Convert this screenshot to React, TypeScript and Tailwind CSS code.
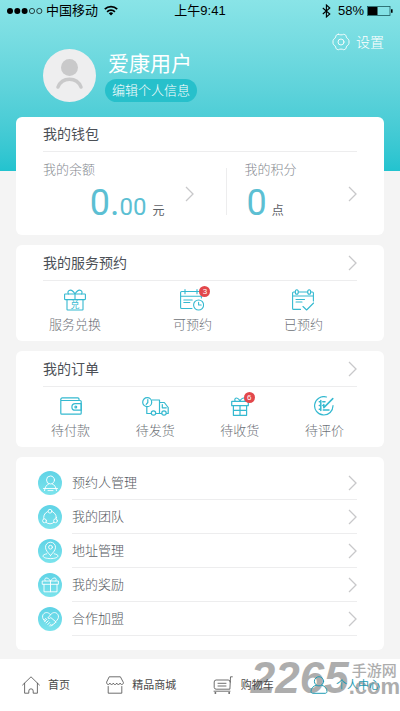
import type { ReactNode, SVGProps } from "react";

type IconProps = SVGProps<SVGSVGElement>;

const Icon = ({ children, ...props }: IconProps) => (
  <svg
    viewBox="0 0 24 24"
    fill="none"
    stroke="currentColor"
    strokeWidth={1.2}
    strokeLinecap="round"
    strokeLinejoin="round"
    aria-hidden="true"
    {...props}
  >
    {children}
  </svg>
);

const Chevron = () => (
  <svg
    viewBox="0 0 9 16"
    className="h-4 w-[9px] shrink-0 text-[#c8c8ca]"
    fill="none"
    stroke="currentColor"
    strokeWidth={1.3}
    aria-hidden="true"
  >
    <path d="M1 1l7 7-7 7" />
  </svg>
);

/* ---------- status bar ---------- */

const StatusBar = () => (
  <div className="flex h-[21px] items-center pr-[7px] pl-[7px] text-[13px] leading-5 text-black">
    <div className="flex flex-1 items-center">
      <svg viewBox="0 0 36 8" className="h-2 w-9" aria-hidden="true">
        <circle cx="3" cy="4" r="3" />
        <circle cx="10.3" cy="4" r="3" />
        <circle cx="17.6" cy="4" r="3" />
        <circle cx="25" cy="4" r="2.6" fill="none" stroke="#000" strokeWidth="0.7" />
        <circle cx="32.3" cy="4" r="2.6" fill="none" stroke="#000" strokeWidth="0.7" />
      </svg>
      <span className="ml-[3px]">中国移动</span>
      <svg viewBox="0 0 14 11" className="ml-[6px] h-[11px] w-[14px]" fill="none" stroke="#000" aria-hidden="true">
        <path d="M.8 4.2a9 9 0 0 1 12.4 0" strokeWidth="1.8" />
        <path d="M3.1 6.8a5.6 5.6 0 0 1 7.8 0" strokeWidth="1.8" />
        <path d="M7 10.600L4.800 8.300a3.200 3.200 0 0 1 4.400 0z" fill="#000" stroke="none" />
      </svg>
    </div>
    <span>上午9:41</span>
    <div className="flex flex-1 items-center justify-end">
      <svg viewBox="0 0 9 14" className="h-[14px] w-[9px]" fill="none" stroke="#000" strokeWidth="1.1" aria-hidden="true">
        <path d="M.8 4l7 6-3.4 3V1l3.4 3-7 6" />
      </svg>
      <span className="ml-[7px]">58%</span>
      <svg viewBox="0 0 26 10" className="ml-[3px] h-[10px] w-[26px]" aria-hidden="true">
        <rect x=".5" y=".5" width="22.5" height="9" fill="none" stroke="#1c5a5e" strokeWidth=".8" />
        <rect x="1" y="1" width="9.5" height="8" />
        <path d="M24 3.2h1.6v3.6H24z" />
      </svg>
    </div>
  </div>
);

/* ---------- service icons ---------- */

const GiftExchangeIcon = () => (
  <Icon viewBox="0 0 22 22" className="size-[22px]" strokeWidth={1.1}>
    <rect x=".6" y="5" width="20.8" height="5.6" rx=".6" />
    <path d="M3 10.8v9.6c0 .4.3.6.6.6h14.8c.3 0 .6-.2.6-.6v-9.6" />
    <path d="M11 5v5.400M11 5C9.500 2.500 7 .5 5.200 1.400 3.600 2.400 4 4.200 4.400 5M11 5c1.500-2.500 4-4.500 5.800-3.600 1.600 1 1.200 2.800.8 3.600" />
    <text
      x="11"
      y="19"
      textAnchor="middle"
      fontSize="9"
      fill="currentColor"
      stroke="none"
    >
      兑
    </text>
  </Icon>
);

const CalendarClockIcon = () => (
  <Icon viewBox="0 0 24 22" className="h-[22px] w-6" strokeWidth={1.1}>
    <path d="M12 19.500H1.600a1 1 0 0 1-1-1V3.500a1 1 0 0 1 1-1h18.800a1 1 0 0 1 1 1V9M.6 7.200h20.800M5 .6v4.200M17 .6v4.200" />
    <path d="M3.800 11h8.400M3.800 13.500h6" />
    <circle cx="18.600" cy="16" r="5" />
    <path d="M18.600 13.200V16h2.600" />
  </Icon>
);

const CalendarCheckIcon = () => (
  <Icon viewBox="0 0 22 22" className="size-[22px]" strokeWidth={1.1}>
    <path d="M8.500 20.400H1.600a1 1 0 0 1-1-1V4a1 1 0 0 1 1-1h1.600M6.400 3h9.200M18.800 3h1.600a1 1 0 0 1 1 1v8M.6 7h20.800" />
    <ellipse cx="4.800" cy="3" rx="1.500" ry="2.300" />
    <ellipse cx="17.200" cy="3" rx="1.500" ry="2.300" />
    <path d="M4 10.500h8.500M4 13h6M11 17.500l3.600 3.500 7-7" />
  </Icon>
);

/* ---------- order icons ---------- */

const WalletIcon = () => (
  <Icon viewBox="0 0 22 18" className="h-[18px] w-[22px]">
    <path d="M.8 3v13.200c0 .6.400 1 1 1h18.400c.6 0 1-.4 1-1V4.500c0-.6-.4-1-1-1H1.800C1 3.500.6 2.600.8 2c.2-.7.700-1.200 1.400-1.200h15.600c.7 0 1.200.5 1.200 1.200v1.400" />
    <path d="M21.200 6.600h-6a3.300 3.300 0 0 0 0 6.600h6z" />
    <circle cx="15.800" cy="9.900" r=".9" />
  </Icon>
);

const TruckIcon = () => (
  <Icon viewBox="0 0 27 19" className="h-[19px] w-[27px]">
    <circle cx="5.200" cy="5.200" r="4.500" />
    <path d="M5.800 2.500v3L4.200 7.300" />
    <path d="M10 3h7.500v13.500H14M4.800 10v6.500h4M17.500 5.500h4.800l3.900 5v6h-1.700M19.500 16.500h-2" />
    <path d="M20.300 7.500v3.300h4" />
    <circle cx="11.500" cy="16" r="2.200" />
    <circle cx="22" cy="16" r="2.200" />
  </Icon>
);

const GiftBoxIcon = () => (
  <Icon viewBox="0 0 18 19" className="h-[19px] w-[18px]">
    <rect x=".7" y="4.300" width="16.600" height="4.400" rx=".3" />
    <path d="M2.400 8.700v9.600h13.200V8.700M9 8.700v9.600M2.400 13.400h13.200" />
    <path d="M9 4C8 2 6 .6 4.700 1.200 3.600 1.700 3.600 3.200 4.200 4.200M9 4c1-2 3-3.400 4.300-2.800 1.100.5 1.100 2 .5 3" />
  </Icon>
);

const ReviewIcon = () => (
  <Icon viewBox="0 0 20 20" className="size-5">
    <path d="M12.500 1A9.200 9.200 0 1 0 19 9.500" />
    <path d="M5.300 5.800h1.400M8.800 5.800H11M5.300 9.500h1.400M8.800 9.500h1M5.300 13.200h1.400M6.800 4.600v9.800M9.300 14h5.700M9.800 11.600l9-9M9.800 8.600v3" strokeWidth="1.500" />
  </Icon>
);

/* ---------- menu icons ---------- */

const PersonIcon = () => (
  <>
    <circle cx="12.500" cy="9" r="4" />
    <path d="M6.500 19.600c.3-3.600 2.300-6 4.200-6.700M18.500 19.600c-.3-3.600-2.300-6-4.200-6.700M5.500 17.500h14M10 19.600h5" />
  </>
);

const TeamIcon = () => (
  <>
    <circle cx="12" cy="12.500" r="6.300" />
    <g fill="#62d8e6">
      <circle cx="12" cy="6.200" r="1.900" />
      <circle cx="6.500" cy="15.800" r="1.900" />
      <circle cx="17.500" cy="15.800" r="1.900" />
    </g>
  </>
);

const AddressIcon = () => (
  <>
    <path d="M12.500 16.500c-3-3.200-5-5.600-5-8.300a5 5 0 0 1 10 0c0 2.700-2 5.100-5 8.300z" />
    <circle cx="12.500" cy="8.200" r="1.900" />
    <path d="M8.800 14.800c-2.300.4-3.800 1.200-3.800 2.200 0 1.500 3.300 2.600 7.500 2.600s7.500-1.100 7.500-2.600c0-1-1.500-1.800-3.800-2.200" />
  </>
);

const RewardIcon = () => (
  <>
    <rect x="4.600" y="8" width="15.800" height="3.300" />
    <path d="M6 11.300v7.500h13v-7.500M12.500 8v10.800M12.500 8c-1-1.800-3-3.400-4.600-3-1.500.5-1.300 2.200-.5 3M12.500 8c1-1.800 3-3.400 4.600-3 1.500.5 1.300 2.200.5 3" />
  </>
);

const PartnerIcon = () => (
  <>
    <path d="M7 14.300c-1.800-1.700-2.700-3.300-2.400-5.300.5-2.800 3.400-4.200 5.800-3 .9.400 1.600 1 2.100 1.800.5-.8 1.200-1.400 2.100-1.800 2.400-1.200 5.300.2 5.800 3 .3 2-.6 3.600-2.400 5.300" />
    <path d="M12.500 7.800L9.800 11c.9.900 2 .6 3-.4l5.200 4.300M6.600 12.600l1.300-1.300M6.600 14.500l2.200-2.200M8 16l2.200-2.200M9.800 17.500l1.900-2M11.600 19l1.400-1.700M13 19l1.700-1.200M14.600 17.800l1.700-1.200M16.300 16.400l1.500-1.200" />
  </>
);

/* ---------- data ---------- */

interface Shortcut {
  label: string;
  icon: ReactNode;
  badge?: number;
}

const services: Shortcut[] = [
  { label: "服务兑换", icon: <GiftExchangeIcon /> },
  { label: "可预约", icon: <CalendarClockIcon />, badge: 3 },
  { label: "已预约", icon: <CalendarCheckIcon /> },
];

const orders: Shortcut[] = [
  { label: "待付款", icon: <WalletIcon /> },
  { label: "待发货", icon: <TruckIcon /> },
  { label: "待收货", icon: <GiftBoxIcon />, badge: 6 },
  { label: "待评价", icon: <ReviewIcon /> },
];

const menu = [
  { label: "预约人管理", icon: <PersonIcon /> },
  { label: "我的团队", icon: <TeamIcon /> },
  { label: "地址管理", icon: <AddressIcon /> },
  { label: "我的奖励", icon: <RewardIcon /> },
  { label: "合作加盟", icon: <PartnerIcon /> },
];

const tabs = [
  {
    label: "首页",
    icon: (
      <Icon viewBox="0 0 18 18" className="size-[18px]" strokeWidth={0.8}>
        <path d="M.6 9L9 .8 17.400 9M2.600 7.300v9.900h4.200V15a2.200 2.200 0 0 1 4.400 0v2.200h4.200V7.300" />
      </Icon>
    ),
  },
  {
    label: "精品商城",
    icon: (
      <Icon viewBox="0 0 18 18" className="size-[18px]" strokeWidth={0.8}>
        <path d="M3.600.8h10.800l3 5.700c0 1.300-.7 2-1.600 2s-1.700-.7-1.700-1.500c0 .8-.8 1.500-1.700 1.500S10.700 7.800 10.700 7c0 .8-.8 1.500-1.700 1.500S7.300 7.800 7.300 7c0 .8-.8 1.500-1.700 1.500S3.900 7.800 3.900 7c0 .8-.8 1.500-1.700 1.500S.6 7.800.6 6.500zM2.200 10.500v6.700h13.600v-6.700" />
      </Icon>
    ),
  },
  {
    label: "购物车",
    icon: (
      <Icon viewBox="0 0 20 18" className="h-[18px] w-5" strokeWidth={0.8}>
        <path d="M19.300.8h-1.800l-.6 12.400H3.200a2 2 0 0 1-2-1.800V6a2 2 0 0 1 2-2h12a2 2 0 0 1 2 2M5 7.300h8M5 10h8M1 15.200h16" />
        <circle cx="2.200" cy="17" r=".5" />
        <circle cx="16" cy="17" r=".5" />
      </Icon>
    ),
  },
  {
    label: "个人中心",
    active: true,
    icon: (
      <Icon viewBox="0 0 18 18" className="size-[18px]" strokeWidth={1}>
        <circle cx="9" cy="5.300" r="4.600" />
        <path d="M6.200 9.300C3.300 10 1 12.200 1 15.500c0 1 .8 1.800 1.800 1.800h12.400c1 0 1.800-.8 1.800-1.800 0-3.300-2.300-5.500-5.200-6.200" />
      </Icon>
    ),
  },
];

/* ---------- blocks ---------- */

const CardHeader = ({ title, link }: { title: string; link?: boolean }) => {
  if (!link) {
    return (
      <div className="mx-[27px] flex h-[35px] items-center border-b border-[#ededee] text-sm text-[#4c5056]">
        <h2>{title}</h2>
      </div>
    );
  }

  return (
    <a
      href="#"
      className="mx-[27px] flex h-9 items-center justify-between border-b border-[#ededee] text-sm text-[#4c5056]"
    >
      <h2>{title}</h2>
      <Chevron />
    </a>
  );
};

const ShortcutLink = ({ label, icon, badge }: Shortcut) => (
  <a href="#" className="flex flex-col items-center">
    <span className="relative flex h-[22px] items-center text-[#35b9d0]">
      {icon}
      {badge && (
        <span className="absolute -top-[3px] -right-[6px] flex size-[11px] items-center justify-center rounded-full bg-[#e2474b] text-[8px] leading-none text-white">
          {badge}
        </span>
      )}
    </span>
    <span className="mt-1 text-[13px] leading-5 font-light text-[#6e7278]">{label}</span>
  </a>
);

export default function App() {
  return (
    <div className="flex min-h-screen flex-col bg-[#f4f4f4] font-['Liberation_Sans','Noto_Sans_CJK_SC',sans-serif]">
      <header className="bg-gradient-to-b from-[#89e4e7] to-[#22c3cf] pb-[69px]">
        <StatusBar />
        <div className="mt-3 flex h-[69px] pr-4 pl-[43px]">
          <div className="flex flex-1 items-end">
            <svg viewBox="0 0 53 53" className="size-[53px]" role="img" aria-label="头像">
              <circle cx="26.500" cy="26.500" r="26.500" fill="#eeeeef" />
              <circle cx="26.500" cy="18.500" r="8.500" fill="#c9c9ca" />
              <path d="M15 38c4-10.500 19-10.500 23 0" fill="none" stroke="#c9c9ca" strokeWidth="3.500" strokeLinecap="round" />
            </svg>
            <div className="ml-[9px]">
              <h1 className="ml-[3px] text-[21px] leading-[30px] text-white">爱康用户</h1>
              <button type="button" className="block h-[23px] rounded-full bg-[#27c0cb] px-[7px] text-[13px] font-light text-white">
                编辑个人信息
              </button>
            </div>
          </div>
          <button type="button" className="flex h-[18px] items-center gap-[6px] text-sm font-light text-white">
            <Icon viewBox="0 0 18 18" className="size-[18px]" strokeWidth={0.9}>
              <path d="M6.600 1.300c1 .8 3.800.8 4.800 0 .6-.3 2.600.8 2.700 1.500 0 1.500 1.200 3 2.400 3.600.7.500.7 4.700 0 5.200-1.200.6-2.400 2.100-2.400 3.600-.1.700-2.100 1.800-2.700 1.500-1-.8-3.800-.8-4.800 0-.6.300-2.600-.8-2.700-1.500 0-1.500-1.200-3-2.400-3.600-.7-.5-.7-4.700 0-5.200 1.200-.6 2.400-2.100 2.400-3.600.1-.7 2.100-1.800 2.700-1.500z" />
              <circle cx="9" cy="9" r="3" />
            </Icon>
            设置
          </button>
        </div>
      </header>

      <main className="-mt-[54px] flex flex-1 flex-col gap-[10px] px-4 pb-[9px]">
        <section className="rounded-md bg-white">
          <CardHeader title="我的钱包" />
          <div className="mx-[27px] grid h-[83px] grid-cols-[7fr_1px_5fr]">
            <a href="#" className="flex items-center pr-8">
              <span className="flex h-full flex-1 flex-col pt-2 pr-5">
                <span className="text-[13px] leading-5 font-light text-[#85898f]">我的余额</span>
                <span className="mt-[5px] flex items-baseline self-end font-['Roboto','Noto_Sans_CJK_SC',sans-serif] text-[#5cbfd3]">
                  <span className="text-4xl leading-9">0.</span>
                  <span className="text-2xl leading-9">00</span>
                  <span className="ml-[6px] text-xs leading-9 text-[#5c6066]">元</span>
                </span>
              </span>
              <Chevron />
            </a>
            <div className="mt-4 mb-5 bg-[#ededee]" />
            <a href="#" className="flex items-center">
              <span className="flex h-full flex-1 flex-col pt-2 pl-[18px]">
                <span className="text-[13px] leading-5 font-light text-[#85898f]">我的积分</span>
                <span className="mt-[5px] ml-[2px] flex items-baseline font-['Roboto','Noto_Sans_CJK_SC',sans-serif] text-[#5cbfd3]">
                  <span className="text-4xl leading-9">0</span>
                  <span className="ml-[5px] text-xs leading-9 text-[#5c6066]">点</span>
                </span>
              </span>
              <Chevron />
            </a>
          </div>
        </section>

        <section className="rounded-md bg-white">
          <CardHeader title="我的服务预约" link />
          <div className="flex justify-between pt-2 pr-[61px] pb-[6px] pl-[33px]">
            {services.map((item) => (
              <ShortcutLink key={item.label} {...item} />
            ))}
          </div>
        </section>

        <section className="rounded-md bg-white">
          <CardHeader title="我的订单" link />
          <div className="flex justify-between pt-2 pr-10 pb-[6px] pl-[35px]">
            {orders.map((item) => (
              <ShortcutLink key={item.label} {...item} />
            ))}
          </div>
        </section>

        <nav className="rounded-md bg-white pt-[9px] pr-[27px] pb-[14px] pl-[22px]">
          {menu.map((item) => (
            <a key={item.label} href="#" className="flex h-[34px] items-center gap-[10px]">
              <span className="flex size-6 items-center justify-center rounded-full bg-gradient-to-b from-[#5fd3e6] to-[#7be3ec] text-white">
                <Icon className="size-6" strokeWidth={0.9}>
                  {item.icon}
                </Icon>
              </span>
              <span className="flex h-full flex-1 items-center justify-between border-b border-[#ededee] text-[13px] font-light text-[#54585e]">
                {item.label}
                <Chevron />
              </span>
            </a>
          ))}
        </nav>
      </main>

      <footer className="relative bg-white">
        {/* site watermark, sits behind the tabs */}
        <div className="absolute top-0 right-0 flex font-bold text-[#adadad]" aria-hidden="true">
          <span className="text-[44px] leading-[38px] italic">2265</span>
          <span className="flex flex-col pt-1">
            <span className="ml-[3px] text-[15px] leading-4 font-medium">手游网</span>
            <span className="text-[22px] leading-4">.com</span>
          </span>
        </div>
        <nav className="relative flex h-[52px] items-center justify-between pr-5 pl-[22px]">
          {tabs.map((tab) => (
            <a
              key={tab.label}
              href="#"
              className={`flex items-center gap-2 text-[11px] ${tab.active ? "text-[#1f9bb3]" : "text-[#4a4a4a]"}`}
            >
              {tab.icon}
              {tab.label}
            </a>
          ))}
        </nav>
      </footer>
    </div>
  );
}
